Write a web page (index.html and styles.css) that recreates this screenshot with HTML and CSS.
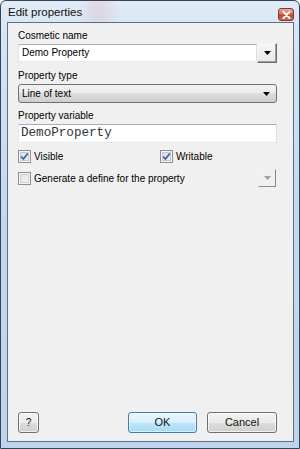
FILE: index.html
```html
<!DOCTYPE html>
<html>
<head>
<meta charset="utf-8">
<link rel="stylesheet" href="styles.css">
</head>
<body>
<div class="window">
  <div class="titlebar">
    <span class="title">Edit properties</span>
    <span class="close"><svg width="9" height="8" viewBox="0 0 9 8"><path d="M1.5 1 L7.5 7 M7.5 1 L1.5 7" stroke="#fff" stroke-width="2" stroke-linecap="round"/></svg></span>
  </div>
  <div class="client">
    <div class="form">
      <div class="label first">Cosmetic name</div>
      <div class="combo">
        <div class="edit">Demo Property</div>
        <div class="dropbtn"><svg width="7" height="4" viewBox="0 0 7 4"><path d="M0 0 H7 L3.5 4 Z" fill="#000"/></svg></div>
      </div>
      <div class="label">Property type</div>
      <div class="select"><span>Line of text</span><svg width="7" height="4" viewBox="0 0 7 4"><path d="M0 0 H7 L3.5 4 Z" fill="#000"/></svg></div>
      <div class="label">Property variable</div>
      <div class="input">DemoProperty</div>
      <div class="checks">
        <div class="check"><span class="box checked"><svg width="9" height="9" viewBox="0 0 9 9"><path d="M1.2 4.6 L3.5 7 L7.8 1.5" stroke="#4a5f97" stroke-width="1.8" fill="none"/></svg></span><span>Visible</span></div>
        <div class="check"><span class="box checked"><svg width="9" height="9" viewBox="0 0 9 9"><path d="M1.2 4.6 L3.5 7 L7.8 1.5" stroke="#4a5f97" stroke-width="1.8" fill="none"/></svg></span><span>Writable</span></div>
      </div>
      <div class="genrow">
        <div class="check"><span class="box"></span><span>Generate a define for the property</span></div>
        <div class="smallbtn"><svg width="7" height="4" viewBox="0 0 7 4"><path d="M0 0 H7 L3.5 4 Z" fill="#a0a0a0"/></svg></div>
      </div>
    </div>
    <div class="footer">
      <div class="btn help">?</div>
      <div class="btns">
        <div class="btn ok">OK</div>
        <div class="btn cancel">Cancel</div>
      </div>
    </div>
  </div>
</div>
</body>
</html>
```
FILE: styles.css
```css
* { box-sizing: border-box; }
html, body { margin: 0; padding: 0; }
body {
  width: 300px;
  height: 449px;
  overflow: hidden;
  font-family: "Liberation Sans", Arial, sans-serif;
  font-size: 10px;
  color: #000;
  background: #fff;
}
.window {
  width: 300px;
  height: 449px;
  border: 1px solid #34455a;
  border-radius: 6px 6px 0 0;
  padding: 0 5px 6px 6px;
  display: flex;
  flex-direction: column;
  background:
    radial-gradient(ellipse 22px 34px at 98px 10px, rgba(215,160,165,0.28), rgba(215,160,165,0) 100%),
    linear-gradient(180deg, #e2ecf7 0px, #d6e5f4 30px, #c5d9ed 200px, #bfd4ea 449px);
}
.titlebar {
  height: 21px;
  display: flex;
  align-items: flex-start;
  justify-content: space-between;
  flex: none;
}
.title {
  font-size: 11.5px;
  padding-left: 1px;
  padding-top: 5px;
  line-height: 13px;
  color: #111;
}
.close {
  margin-top: 7px;
  width: 16px;
  height: 13px;
  border: 1px solid #7d3a31;
  border-radius: 3px;
  background: linear-gradient(180deg, #e9a89c 0%, #d7705f 45%, #c0422c 55%, #d26a4f 100%);
  display: flex;
  align-items: center;
  justify-content: center;
}
.client {
  flex: 1;
  background: #f0f0f0;
  border: 1px solid #5b6f86;
  display: flex;
  flex-direction: column;
  padding: 0 16px 8px 10px;
}
.form {
  display: flex;
  flex-direction: column;
}
.label {
  line-height: 12px;
  height: 12px;
  margin-top: 7px;
  margin-bottom: 2px;
}
.label.first { margin-top: 7px; margin-bottom: 1px; }
.combo {
  display: flex;
  height: 20px;
  align-items: center;
}
.edit {
  flex: 1;
  height: 18px;
  background: #fff;
  border: 1px solid;
  border-color: #abadb3 #dbdfe6 #e3e9ef #e2e3ea;
  padding-left: 3px;
  line-height: 16px;
}
.dropbtn {
  width: 20px;
  height: 20px;
  background: linear-gradient(180deg, #f7f7f7, #e7e7e7);
  border: 1px solid;
  border-color: #f4f4f4 #6a6a6a #6a6a6a #f4f4f4;
  box-shadow: inset -1px -1px 0 #a0a0a0;
  display: flex;
  align-items: center;
  justify-content: center;
}
.select {
  height: 19px;
  border: 1px solid #707070;
  border-radius: 3px;
  background: linear-gradient(180deg, #f2f2f2 0%, #ebebeb 50%, #dddddd 50%, #cfcfcf 100%);
  display: flex;
  align-items: center;
  justify-content: space-between;
  padding: 0 6px 0 3px;
  line-height: 17px;
}
.input {
  height: 19px;
  background: #fff;
  border: 1px solid;
  border-color: #abadb3 #dbdfe6 #e3e9ef #e2e3ea;
  font-family: "Liberation Mono", "Courier New", monospace;
  font-size: 12.6px;
  line-height: 17px;
  padding-left: 2px;
  color: #333;
}
.checks {
  margin-top: 7px;
  display: grid;
  grid-template-columns: 142px 1fr;
  height: 13px;
}
.check {
  display: flex;
  align-items: center;
  gap: 3px;
  height: 13px;
  line-height: 13px;
}
.box {
  width: 13px;
  height: 13px;
  border: 1px solid #8e8f8f;
  background: linear-gradient(135deg, #dcdcdc, #fbfbfb);
  box-shadow: inset 0 0 0 1px #f4f4f4, inset 0 0 0 2px #d0d0d0;
  display: flex;
  align-items: center;
  justify-content: center;
  flex: none;
}
.box.checked {
  background: linear-gradient(135deg, #cdd9ea, #f5f8fc);
  box-shadow: inset 0 0 0 1px #f4f4f4, inset 0 0 0 2px #c1cbd8;
}
.genrow {
  margin-top: 6px;
  height: 18px;
  display: flex;
  align-items: center;
  justify-content: space-between;
}
.smallbtn {
  width: 18px;
  height: 18px;
  margin-right: 1px;
  border: 1px solid;
  border-color: #f4f4f4 #8a8a8a #8a8a8a #f4f4f4;
  background: #f0f0f0;
  display: flex;
  align-items: center;
  justify-content: center;
}
.footer {
  margin-top: auto;
  display: flex;
  justify-content: space-between;
  align-items: flex-end;
}
.btns {
  display: flex;
  gap: 10px;
}
.btn {
  height: 21px;
  border: 1px solid #707070;
  border-radius: 3px;
  background: linear-gradient(180deg, #f2f2f2 0%, #ebebeb 50%, #dddddd 50%, #cfcfcf 100%);
  box-shadow: inset 0 0 0 1px rgba(255,255,255,0.7);
  display: flex;
  align-items: center;
  justify-content: center;
  font-size: 11px;
  line-height: 19px;
  color: #111;
}
.help {
  width: 21px;
  font-size: 10px;
}
.ok {
  width: 69px;
  border-color: #3c7fb1;
  background: linear-gradient(180deg, #eaf6fd 0%, #d9f0fc 50%, #bee6fd 50%, #a7d9f5 100%);
  box-shadow: inset 0 0 0 1px rgba(255,255,255,0.6);
}
.cancel {
  width: 70px;
}
```
